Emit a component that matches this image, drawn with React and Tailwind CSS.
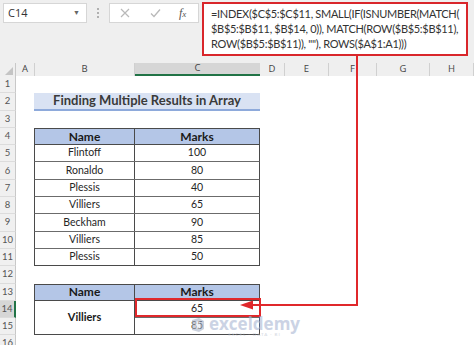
import React from "react";

const ROW_H = "h-[17.3px]";

function RowNum({ n, active }) {
  return (
    <div
      className={
        "h-[17.3px] flex items-center justify-center text-[9.5px] text-[#555] border-b border-[#dcdcdc] " +
        (active ? "bg-[#d6d6d6] border-r-2 border-r-[#217346]" : "bg-[#f0f0f0] border-r border-r-[#c8c8c8]")
      }
    >
      {n}
    </div>
  );
}

function DataRow({ name, mark, last }) {
  return (
    <div className={"h-[17.3px] flex w-[226px] text-[10.5px] text-[#262626] border-x border-[#4a4a4a] " + (last ? "border-b border-b-[#4a4a4a]" : "border-b border-b-[#6b6b6b]")}>
      <div className="w-[100px] border-r border-[#4a4a4a] flex items-center justify-center">{name}</div>
      <div className="flex-1 flex items-center justify-center">{mark}</div>
    </div>
  );
}

function HeaderRow() {
  return (
    <div className="h-[17.3px] flex w-[226px] text-[12px] font-bold text-[#1a1a1a] bg-[#b4c6e7] border border-[#4a4a4a]">
      <div className="w-[100px] border-r border-[#4a4a4a] flex items-center justify-center">Name</div>
      <div className="flex-1 flex items-center justify-center">Marks</div>
    </div>
  );
}

const Empty = () => <div className={ROW_H} />;

export default function App() {
  const data = [
    ["Flintoff", "100"],
    ["Ronaldo", "80"],
    ["Plessis", "40"],
    ["Villiers", "65"],
    ["Beckham", "90"],
    ["Villiers", "85"],
    ["Plessis", "50"],
  ];
  const cols = [
    ["A", 19],
    ["B", 100],
    ["C", 125],
    ["D", 25],
    ["E", 44],
    ["F", 48],
    ["G", 53],
    ["H", 44],
  ];
  return (
    <div className="w-[474px] h-[345px] overflow-hidden bg-white relative" style={{ fontFamily: "Lato, 'Open Sans', sans-serif" }}>
      {/* toolbar */}
      <div className="h-[63px] bg-[#efefef] flex items-start">
        <div className="ml-[3px] mt-[3px] w-[84px] h-[20px] bg-white border border-[#d6d6d6] flex items-center justify-between px-[4px] text-[11px] text-[#333]" style={{ fontFamily: "'Open Sans', sans-serif" }}>
          <span>C14</span>
          <span className="text-[7px] text-[#666] mr-[2px]">▼</span>
        </div>
        <div className="ml-[10px] mt-[8px] flex flex-col gap-[2px]">
          <div className="w-[2px] h-[2px] bg-[#b0b0b0]" />
          <div className="w-[2px] h-[2px] bg-[#b0b0b0]" />
          <div className="w-[2px] h-[2px] bg-[#b0b0b0]" />
        </div>
        <div className="ml-[10px] mt-[3px] w-[90px] h-[20px] bg-white border border-[#d6d6d6] flex items-center">
          <svg width="12" height="12" viewBox="0 0 12 12" className="ml-[9px]">
            <path d="M2 2 L10 10 M10 2 L2 10" stroke="#b9b9b9" strokeWidth="1.2" />
          </svg>
          <svg width="13" height="12" viewBox="0 0 13 12" className="ml-[18px]">
            <path d="M2 6.5 L5 9.5 L11 2.5" stroke="#b9b9b9" strokeWidth="1.3" fill="none" />
          </svg>
          <span className="ml-[17px] text-[12px] italic text-[#555]" style={{ fontFamily: "'Liberation Serif', serif" }}>
            f<span className="text-[9px]">x</span>
          </span>
        </div>
        <div className="ml-[3px] mt-[2px] w-[266px] h-[54px] bg-white border-2 border-[#d9262b] pl-[7px] pt-[2px] text-[11px] leading-[15px] tracking-[-0.3px] text-[#333] whitespace-nowrap overflow-hidden">
          <div>=INDEX($C$5:$C$11, SMALL(IF(ISNUMBER(MATCH(</div>
          <div>$B$5:$B$11, $B$14, 0)), MATCH(ROW($B$5:$B$11),</div>
          <div>ROW($B$5:$B$11)), ""), ROWS($A$1:A1)))</div>
        </div>
      </div>

      {/* column headers */}
      <div className="h-[13px] flex bg-[#efefef] text-[9.5px] text-[#444]" style={{ fontFamily: "'Open Sans', sans-serif" }}>
        <div className="w-[16px] border-r border-[#c8c8c8] relative">
          <svg width="8" height="8" viewBox="0 0 8 8" className="absolute right-[2px] bottom-[1px]">
            <path d="M8 0 L8 8 L0 8 Z" fill="#c4c4c4" />
          </svg>
        </div>
        {cols.map(([c, w]) => (
          <div
            key={c}
            style={{ width: w }}
            className={
              "shrink-0 flex items-center justify-center " +
              (c === "C" ? "bg-[#d6d6d6] border-b-2 border-[#217346]" : "border-r border-[#d0d0d0]")
            }
          >
            {c}
          </div>
        ))}
      </div>

      {/* body */}
      <div className="flex">
        <div className="w-[16px] shrink-0">
          {Array.from({ length: 16 }, (_, i) => (
            <RowNum key={i} n={i + 1} active={i + 1 === 14} />
          ))}
        </div>
        <div className="ml-[18px] flex flex-col">
          <Empty />
          <div className="h-[17.3px] w-[226px] bg-[#d9e2f3] border-b-2 border-[#8eaadb] flex items-center justify-center text-[13px] font-bold text-[#3a3a3a]">
            Finding Multiple Results in Array
          </div>
          <Empty />
          <HeaderRow />
          {data.map(([n, m], i) => (
            <DataRow key={i} name={n} mark={m} last={i === data.length - 1} />
          ))}
          <Empty />
          <HeaderRow />
          <div className="h-[34.6px] flex w-[226px] border-x border-b border-[#4a4a4a] text-[10.5px] text-[#262626]">
            <div className="w-[100px] border-r border-[#4a4a4a] flex items-center justify-center font-bold text-[11px] text-[#1a1a1a]">Villiers</div>
            <div className="flex-1 flex flex-col">
              <div className="h-[17.3px] flex items-center justify-center border-b border-[#6b6b6b]">65</div>
              <div className="flex-1 flex items-center justify-center">85</div>
            </div>
          </div>
        </div>
      </div>

      {/* annotations */}
      <div className="absolute left-[135px] top-[298px] w-[126px] h-[19px] border-2 border-[#e0282b]" />
      <svg className="absolute left-0 top-0" width="474" height="345">
        <path d="M357 56 L357 305 L250 305" stroke="#e0282b" strokeWidth="2" fill="none" />
        <path d="M240 305 L253 300.5 L253 309.5 Z" fill="#e0282b" />
      </svg>

      {/* watermark */}
      <div className="absolute left-[190px] top-[315px] flex items-start opacity-60">
        <svg width="16" height="16" viewBox="0 0 16 16" className="mt-[2px]">
          <path d="M2 3 L9 1 L14 4 L14 12 L9 15 L2 13 Z" fill="#aab4c8" />
          <path d="M5 5 L10 4 L10 12 L5 11 Z" fill="#e8ecf3" />
        </svg>
        <div className="ml-[3px] flex flex-col items-center">
          <div className="text-[17px] leading-[17px] font-bold text-[#a9b6d3]" style={{ fontFamily: "'Open Sans', sans-serif" }}>exceldemy</div>
          <div className="text-[4.5px] leading-[5px] tracking-[1px] text-[#b5bccb]">EXCEL · DATA · BI</div>
        </div>
      </div>
    </div>
  );
}
